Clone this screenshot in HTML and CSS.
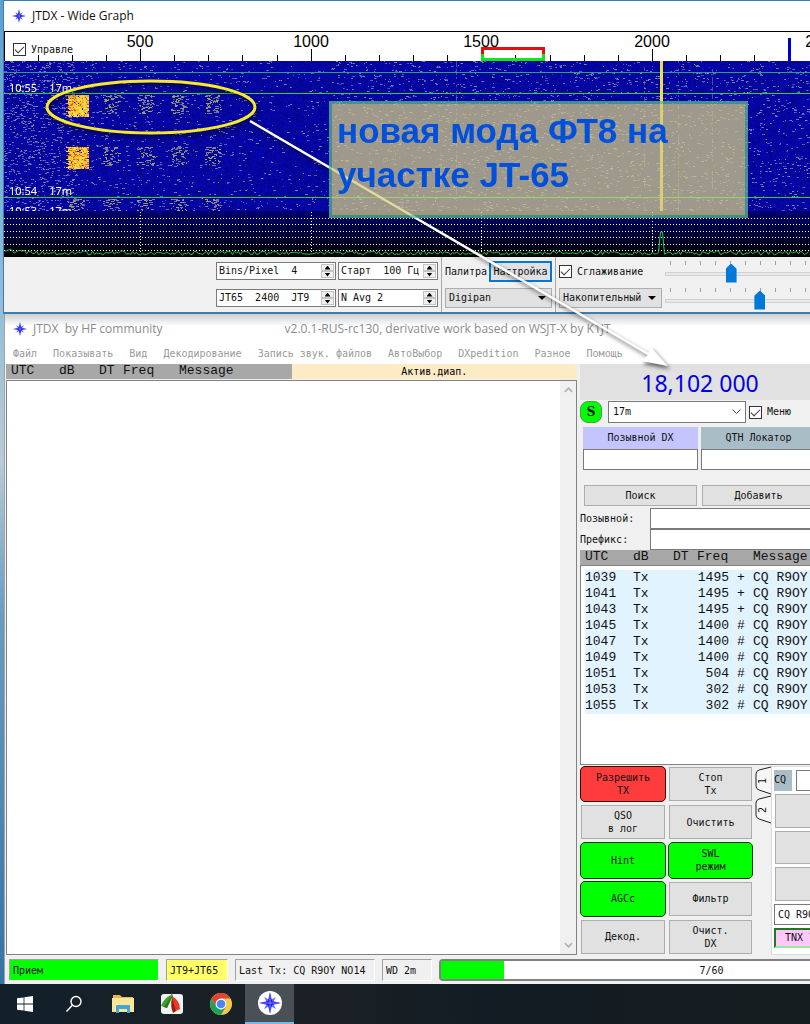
FILE: index.html
```html
<!DOCTYPE html>
<html lang="ru">
<head>
    <meta charset="UTF-8">
    <meta name="viewport" content="width=device-width, initial-scale=1.0">
    <title>JTDX</title>
    <link rel="stylesheet" href="styles.css">
</head>
<body>
    <svg width="0" height="0" class="symbols" aria-hidden="true">
        <symbol id="star" viewBox="0 0 24 24">
            <path fill="#6a6aff" d="M12 9l6.500-3.500L15 12l3.500 6.500L12 15l-6.500 3.500L9 12 5.500 5.500z"/>
            <path fill="#1a1af0" d="M12 0l2.200 9.800L24 12l-9.800 2.200L12 24l-2.200-9.800L0 12l9.800-2.200z"/>
            <path fill="none" stroke="#b9b9ff" stroke-width="0.700" d="M12 12V4M12 12h8M12 12v8M12 12H4"/>
        </symbol>
    </svg>

    <!-- Wide Graph -->
    <section class="window graph-window">
        <header class="titlebar">
            <svg class="logo"><use href="#star"/></svg>
            <span>JTDX - Wide Graph</span>
        </header>

        <div class="scale">
            <svg class="scale-ticks" id="scale"></svg>
            <label class="check scale-check"><input type="checkbox" checked>Управле</label>
        </div>

        <div class="waterfall">
            <canvas id="waterfall" height="196"></canvas>
            <div class="stamps">
                <span class="stamp stamp-1">10:55<b>17m</b></span>
                <span class="stamp stamp-2">10:54<b>17m</b></span>
                <span class="stamp stamp-3">10:53<b>17m</b></span>
            </div>
        </div>

        <div class="graph-controls">
            <div class="spins">
                <div class="spin"><input type="text" aria-label="Bins/Pixel" value="Bins/Pixel  4"><span class="arrows"><button aria-label="+"></button><button aria-label="-"></button></span></div>
                <div class="spin"><input type="text" aria-label="Старт" value="Старт  100 Гц"><span class="arrows"><button aria-label="+"></button><button aria-label="-"></button></span></div>
                <div class="spin"><input type="text" aria-label="JT65 JT9" value="JT65  2400  JT9"><span class="arrows"><button aria-label="+"></button><button aria-label="-"></button></span></div>
                <div class="spin"><input type="text" aria-label="N Avg" value="N Avg 2"><span class="arrows"><button aria-label="+"></button><button aria-label="-"></button></span></div>
            </div>
            <div class="group palette">
                <div class="line">
                    <label for="palette">Палитра</label>
                    <button class="btn focus">Настройка</button>
                </div>
                <select id="palette" class="combo"><option>Digipan</option></select>
            </div>
            <div class="group smooth">
                <div class="line">
                    <label class="check"><input type="checkbox" checked>Сглаживание</label>
                </div>
                <select class="combo" aria-label="Режим"><option>Накопительный</option></select>
            </div>
            <div class="sliders">
                <input type="range" min="0" max="289" value="60" aria-label="Усиление">
                <input type="range" min="0" max="289" value="89" aria-label="Ноль">
            </div>
        </div>
    </section>

    <!-- Main window -->
    <section class="window main-window">
        <header class="titlebar inactive">
            <svg class="logo"><use href="#star"/></svg>
            <span>JTDX&nbsp; by HF community</span>
            <span class="version">v2.0.1-RUS-rc130, derivative work based on WSJT-X by K1JT</span>
        </header>

        <nav class="menu">
            <a href="#">Файл</a>
            <a href="#">Показывать</a>
            <a href="#">Вид</a>
            <a href="#">Декодирование</a>
            <a href="#">Запись звук. файлов</a>
            <a href="#">АвтоВыбор</a>
            <a href="#">DXpedition</a>
            <a href="#">Разное</a>
            <a href="#">Помощь</a>
        </nav>

        <div class="main-body">
            <div class="band">
                <div class="band-head">
                    <div class="columns"><span>UTC</span><span>dB</span><span>DT</span><span>Freq</span><span>Message</span></div>
                    <div class="band-title">Актив.диап.</div>
                </div>
                <div class="listing">
                    <div class="scrollbar">
                        <svg viewBox="0 0 10 6"><path d="M1 5l4-4 4 4"/></svg>
                        <svg viewBox="0 0 10 6"><path d="M1 1l4 4 4-4"/></svg>
                    </div>
                </div>
            </div>

            <div class="side">
                <div class="radio">
                    <div class="freq">18,102 000</div>
                    <div class="band-row">
                        <button class="s-btn">S</button>
                        <select class="band-select" aria-label="Диапазон"><option>17m</option></select>
                        <label class="check"><input type="checkbox" checked>Меню</label>
                    </div>
                    <div class="dx">
                        <div class="dx-field">
                            <label class="dx-call" for="dxcall">Позывной DX</label>
                            <input class="field" type="text" id="dxcall">
                        </div>
                        <div class="dx-field">
                            <label class="dx-grid" for="dxgrid">QTH Локатор</label>
                            <input class="field" type="text" id="dxgrid">
                        </div>
                        <button class="btn">Поиск</button>
                        <button class="btn">Добавить</button>
                    </div>
                </div>
                <div class="form">
                    <label for="call">Позывной:</label><input class="field" type="text" id="call">
                    <label for="prefix">Префикс:</label><input class="field" type="text" id="prefix">
                </div>
                <div class="columns side-columns"><span>UTC</span><span>dB</span><span>DT</span><span>Freq</span><span>Message</span></div>
                <div class="log">
                    <table>
                        <tbody>
                            <tr><td>1039</td><td>Tx</td><td>1495</td><td>+</td><td>CQ R9OY</td></tr>
                            <tr><td>1041</td><td>Tx</td><td>1495</td><td>+</td><td>CQ R9OY</td></tr>
                            <tr><td>1043</td><td>Tx</td><td>1495</td><td>+</td><td>CQ R9OY</td></tr>
                            <tr><td>1045</td><td>Tx</td><td>1400</td><td>#</td><td>CQ R9OY</td></tr>
                            <tr><td>1047</td><td>Tx</td><td>1400</td><td>#</td><td>CQ R9OY</td></tr>
                            <tr><td>1049</td><td>Tx</td><td>1400</td><td>#</td><td>CQ R9OY</td></tr>
                            <tr><td>1051</td><td>Tx</td><td>504</td><td>#</td><td>CQ R9OY</td></tr>
                            <tr><td>1053</td><td>Tx</td><td>302</td><td>#</td><td>CQ R9OY</td></tr>
                            <tr><td>1055</td><td>Tx</td><td>302</td><td>#</td><td>CQ R9OY</td></tr>
                        </tbody>
                    </table>
                </div>
                <div class="bottom">
                    <div class="actions">
                        <button class="btn on red">Разрешить<br>TX</button>
                        <button class="btn">Стоп<br>Tx</button>
                        <button class="btn">QSO<br>в лог</button>
                        <button class="btn">Очистить</button>
                        <button class="btn on">Hint</button>
                        <button class="btn on">SWL<br>режим</button>
                        <button class="btn on">AGCc</button>
                        <button class="btn">Фильтр</button>
                        <button class="btn">Декод.</button>
                        <button class="btn">Очист.<br>DX</button>
                    </div>
                    <div class="tabs">
                        <button class="tab"><svg viewBox="0 0 16 29"><path d="M16 1L4 4Q1 5 1 8v12q0 3 3 4l12 4"/></svg><span>1</span></button>
                        <button class="tab"><svg viewBox="0 0 16 29"><path d="M16 1L4 4Q1 5 1 8v12q0 3 3 4l12 4"/></svg><span>2</span></button>
                    </div>
                    <div class="pane">
                        <div class="cq-row"><label for="cq">CQ</label><input class="field" type="text" id="cq"></div>
                        <button class="btn pane-btn" aria-label="Tx 1"></button>
                        <button class="btn pane-btn" aria-label="Tx 2"></button>
                        <button class="btn pane-btn" aria-label="Tx 3"></button>
                        <input class="field pane-msg" type="text" aria-label="Сообщение" value="CQ R9OY NO14">
                        <button class="tnx">TNX 73</button>
                    </div>
                </div>
            </div>
        </div>

        <footer class="status">
            <div class="cell rx">Прием</div>
            <div class="cell mode">JT9+JT65</div>
            <div class="cell last">Last Tx: CQ R9OY NO14</div>
            <div class="cell wd">WD 2m</div>
            <div class="progress">
                <progress max="60" value="7"></progress>
                <span>7/60</span>
            </div>
        </footer>
    </section>

    <footer class="taskbar">
        <button aria-label="Пуск">
            <svg width="16" height="16" viewBox="0 0 16 16"><path fill="#fff" d="M0 2.3l6.6-.9v6.2H0zM7.4 1.3L16 0v7.6H7.4zM0 8.4h6.6v6.2L0 13.7zM7.4 8.4H16V16l-8.6-1.3z"/></svg>
        </button>
        <button aria-label="Поиск">
            <svg width="18" height="18" viewBox="0 0 18 18"><circle cx="11" cy="6.5" r="5" fill="none" stroke="#fff" stroke-width="1.4"/><path d="M7.3 10.3L1.5 16.5" stroke="#fff" stroke-width="1.4"/></svg>
        </button>
        <button aria-label="Проводник">
            <svg width="22" height="20" viewBox="0 0 22 20"><path fill="#e8b64c" d="M1 1h7l2 2h11v4H1z"/><path fill="#fde59a" d="M0 4h22v14H0z"/><path fill="#3fa9dc" d="M4 19v-7q0-1 1-1h12q1 0 1 1v7h-3v-4H7v4z"/></svg>
        </button>
        <button aria-label="FastStone">
            <svg width="22" height="22" viewBox="0 0 22 22"><rect y="1" width="22" height="20" rx="3" fill="#f2f2f2"/><path fill="#3f9b2f" d="M11 0l1 3-6 12-6-2Q3 5 10 2z"/><path fill="#257a1d" d="M11 3L6 15l-3-1z"/><path fill="#e23a24" d="M11 3q8 5 8 13l-6 3-2-8z"/><path fill="#9e1b12" d="M11 5l4 13-3 2q-3-7-1-15z"/></svg>
        </button>
        <button aria-label="Chrome">
            <svg width="22" height="22" viewBox="0 0 22 22"><circle cx="11" cy="11" r="11" fill="#f9c846"/><path fill="#dc4437" d="M1.5 5.500A11 11 0 0 1 20.500 5.500H11L6.200 13.800z"/><path fill="#1fa05c" d="M1.500 5.500L6.200 13.800 11 16.500 15.800 13.800 11 22A11 11 0 0 1 1.500 5.500z"/><circle cx="11" cy="11" r="5.400" fill="#fff"/><circle cx="11" cy="11" r="4.300" fill="#4688f1"/></svg>
        </button>
        <button class="active" aria-label="JTDX">
            <svg width="24" height="24" viewBox="0 0 24 24"><circle cx="12" cy="12" r="12" fill="#fff"/><use href="#star" x="1" y="1" width="22" height="22"/></svg>
        </button>
    </footer>

    <!-- Notes drawn over both windows -->
    <svg class="arrow" width="810" height="400" aria-hidden="true">
        <ellipse cx="151" cy="107" rx="104" ry="26" fill="none" stroke="#f7e92c" stroke-width="3"/>
        <path d="M250 121L650 355" stroke="#fff" stroke-width="2.500"/>
        <path d="M668 366L641 361 648 355 650 346z" fill="#fff"/>
    </svg>
    <div class="note">новая мода ФТ8 на участке JT-65</div>

    <script src="script.js"></script>
</body>
</html>
```

FILE: styles.css
```css
* {
    box-sizing: border-box;
}

body {
    margin: 0;
    min-height: 100vh;
    display: flex;
    flex-direction: column;
    position: relative;
    overflow: hidden;
    background: linear-gradient(#5f9fcc, #7fb4d6 20%, #b9cbd6 45%, #6a9cc0 60%, #2f6f9f 100%);
    font-family: "DejaVu Sans Mono", monospace;
    font-size: 10px;
    line-height: 12px;
    color: #111;
}

button, input, select {
    font: inherit;
    color: inherit;
    margin: 0;
    padding: 0;
    border-radius: 0;
}

.symbols {
    position: absolute;
}

/* windows */
.window {
    background: #f0f0f0;
}

.graph-window {
    margin-left: 3px;
    border: solid #3a7db3;
    border-width: 1px 0 2px 1px;
}

.main-window {
    flex: 1;
    display: flex;
    flex-direction: column;
    margin-left: 4px;
    margin-right: -174px;
    border-left: 1px solid #9aa4ac;
}

.titlebar {
    display: flex;
    align-items: center;
    height: 30px;
    padding-left: 8px;
    background: #fff;
    font-family: "Open Sans", sans-serif;
    font-size: 12px;
    line-height: 16px;
}

.titlebar.inactive {
    color: #8c8c8c;
    background: linear-gradient(#cfcfcf, #fff 12px);
}

.logo {
    width: 14px;
    height: 14px;
    margin-right: 6px;
}

.version {
    margin-left: 122px;
}

/* frequency scale */
.scale {
    position: relative;
    height: 30px;
    background: #fff;
    border-top: 1px solid #000;
    border-left: 1px solid #000;
}

.scale-ticks {
    display: block;
    width: 100%;
    height: 29px;
    font-family: "Liberation Sans", sans-serif;
    font-size: 16px;
}

.scale-check {
    position: absolute;
    left: 8px;
    top: 11px;
}

.check {
    display: flex;
    align-items: center;
    gap: 5px;
}

.check input {
    appearance: none;
    width: 13px;
    height: 13px;
    border: 1px solid #333;
    background: #fff;
}

.check input:checked::before {
    content: "";
    display: block;
    width: 8px;
    height: 4px;
    margin: 2px 1px;
    border: solid #333;
    border-width: 0 0 1px 1px;
    transform: rotate(-45deg);
}

/* waterfall */
.waterfall {
    position: relative;
    height: 196px;
    background: #0808a0;
}

.waterfall canvas {
    display: block;
}

.stamps {
    position: absolute;
    left: 0;
    top: 0;
    width: 100%;
    height: 150px;
    overflow: hidden;
    color: #fff;
    font-family: "Noto Sans", sans-serif;
    font-size: 11px;
}

.stamp {
    position: absolute;
    left: 5px;
}

.stamp b {
    font-weight: normal;
    margin-left: 12px;
}

.stamp-1 { top: 21px; }
.stamp-2 { top: 124px; }
.stamp-3 { top: 144px; }

/* controls under the waterfall */
.graph-controls {
    display: flex;
    height: 55px;
    padding-left: 212px;
    overflow: hidden;
}

.graph-controls > div {
    flex: none;
}

.spins {
    display: grid;
    grid-template-columns: 120px 100px;
    grid-auto-rows: 18px;
    gap: 9px 2px;
    padding: 5px 3px 0 0;
}

.spin {
    display: flex;
    border: 1px solid #7a7a7a;
    background: #fff;
}

.spin input {
    flex: 1;
    min-width: 0;
    border: 0;
    padding-left: 2px;
    background: none;
    white-space: pre;
}

.arrows {
    display: flex;
    flex-direction: column;
    width: 14px;
    padding: 1px 1px 1px 0;
}

.arrows button {
    flex: 1;
    border: 1px solid #c4c4c4;
    background: #f0f0f0;
}

.arrows button::before {
    content: "";
    display: block;
    width: 6px;
    height: 4px;
    margin: auto;
    background: #000;
    clip-path: polygon(50% 0, 100% 100%, 0 100%);
}

.arrows button + button::before {
    clip-path: polygon(0 0, 100% 0, 50% 100%);
}

.group {
    border-left: 1px solid #a8a8a8;
    padding: 4px 3px 0;
    display: flex;
    flex-direction: column;
    gap: 6px;
}

.line {
    display: flex;
    align-items: center;
    justify-content: space-between;
    height: 21px;
}

.palette {
    width: 114px;
}

.smooth {
    width: 110px;
}

.btn {
    background: #e1e1e1;
    border: 1px solid #adadad;
    text-align: center;
}

.focus {
    height: 21px;
    width: 63px;
    border: 2px solid #0078d7;
}

.combo {
    appearance: none;
    height: 20px;
    width: 100%;
    padding-left: 3px;
    border: 1px solid #adadad;
    background: #e1e1e1 url("data:image/svg+xml,%3Csvg xmlns='http://www.w3.org/2000/svg' width='8' height='4'%3E%3Cpath d='M0 0h8L4 4z'/%3E%3C/svg%3E") no-repeat right 5px center;
}

.sliders {
    display: flex;
    flex-direction: column;
    gap: 6px;
    padding-top: 4px;
}

.sliders input {
    appearance: none;
    flex: none;
    width: 300px;
    height: 21px;
    background: repeating-linear-gradient(90deg, #a0a0a0 0 1px, transparent 1px 15px) 5px 0 / 290px 4px no-repeat;
}

.sliders input::-webkit-slider-runnable-track {
    height: 4px;
    margin-top: 4px;
    background: #e7eaea;
    border: 1px solid #d0d0d0;
}

.sliders input::-webkit-slider-thumb {
    appearance: none;
    width: 11px;
    height: 19px;
    margin-top: -9px;
    background: #0078d7;
    clip-path: polygon(50% 0, 100% 28%, 100% 100%, 0 100%, 0 28%);
}

/* main window */
.menu {
    display: flex;
    gap: 16px;
    height: 20px;
    padding-left: 8px;
    align-items: center;
    background: #fff;
}

.menu a {
    color: #999;
    text-decoration: none;
}

.main-body {
    flex: 1;
    display: grid;
    grid-template-columns: minmax(0, 1fr) 404px;
    gap: 3px;
    padding-left: 1px;
}

.band {
    display: flex;
    flex-direction: column;
}

.band-head {
    display: grid;
    grid-template-columns: 1fr 1fr;
    height: 15px;
    margin-bottom: 1px;
}

.columns {
    display: grid;
    grid-template-columns: 48px 40px 24px 56px 1fr;
    padding-left: 5px;
    height: 15px;
    line-height: 14px;
    background: #a8a8a8;
    font-family: "Liberation Mono", monospace;
    font-size: 13px;
}

.band-title {
    background: #fdebc6;
    color: #000;
    text-align: center;
    line-height: 15px;
}

.listing {
    flex: 1;
    display: flex;
    justify-content: flex-end;
    background: #fff;
    border: 1px solid #828282;
}

.scrollbar {
    width: 16px;
    display: flex;
    flex-direction: column;
    justify-content: space-between;
    align-items: center;
    padding: 6px 0;
    background: #f0f0f0;
}

.scrollbar svg {
    width: 9px;
    height: 6px;
    fill: none;
    stroke: #b4b4b4;
    stroke-width: 2;
}

.side {
    display: flex;
    flex-direction: column;
}

.radio {
    width: 240px;
}

.freq {
    height: 36px;
    line-height: 38px;
    background: #e1e1e1;
    color: #0000e6;
    text-align: center;
    font-family: "Noto Sans", sans-serif;
    font-size: 23px;
}

.band-row {
    display: flex;
    align-items: center;
    height: 24px;
}

.s-btn {
    width: 22px;
    height: 22px;
    margin-right: 6px;
    border: 1px solid #4c9a4c;
    border-radius: 8px;
    background: #00ff00;
    font-family: "DejaVu Serif", serif;
    font-size: 12px;
    font-weight: bold;
}

.band-select {
    appearance: none;
    width: 138px;
    height: 22px;
    margin-right: 3px;
    padding-left: 4px;
    border: 1px solid #7a7a7a;
    background: #fff url("data:image/svg+xml,%3Csvg xmlns='http://www.w3.org/2000/svg' width='9' height='6'%3E%3Cpath d='M.5.5l4 4 4-4' fill='none' stroke='%23444'/%3E%3C/svg%3E") no-repeat right 4px center;
}

.dx {
    display: grid;
    grid-template-columns: 115px 115px;
    grid-template-rows: 43px 21px;
    gap: 15px 3px;
    padding: 3px 3px 0;
}

.dx-field {
    display: flex;
    flex-direction: column;
}

.dx-field label {
    height: 22px;
    line-height: 22px;
    text-align: center;
}

.dx-call {
    background: #c4c4ff;
}

.dx-grid {
    background: #a9bdc6;
}

.dx .btn {
    margin: 0 1px;
}

.field {
    height: 21px;
    border: 1px solid #7a7a7a;
    background: #fff;
}

.form {
    display: grid;
    grid-template-columns: 70px 1fr;
    align-items: center;
    padding-top: 2px;
}

.log {
    height: 200px;
    padding: 4px;
    border: 1px solid #828282;
    background: #fff;
    overflow: hidden;
    font-family: "Liberation Mono", monospace;
    font-size: 13px;
}

.side-columns {
    flex: none;
}

.log table {
    table-layout: fixed;
    width: 100%;
    border-spacing: 0;
    background: #e1f3ff;
}

.log td {
    height: 16px;
    padding: 0;
    line-height: 16px;
}

.log td:nth-child(1) { width: 48px; }
.log td:nth-child(2) { width: 40px; }
.log td:nth-child(3) { width: 56px; text-align: right; }
.log td:nth-child(4) { width: 24px; padding-left: 8px; }

.bottom {
    display: grid;
    grid-template-columns: 173px 18px 1fr;
    flex: 1;
    padding-top: 1px;
}

.actions {
    display: grid;
    grid-template-columns: 86px 85px;
    grid-auto-rows: 1fr;
    gap: 2px;
}

.actions .btn {
    margin: 1px;
    line-height: 13px;
}

.actions .on {
    margin: 0;
    border-color: #003c00;
    border-radius: 5px;
    background: #00ff00;
}

.actions .red {
    border-color: #3c0000;
    background: #ff3c3c;
}

.tabs {
    display: flex;
    flex-direction: column;
    align-items: flex-end;
}

.tab {
    position: relative;
    width: 16px;
    height: 29px;
    border: 0;
    background: none;
}

.tab svg {
    display: block;
    fill: #f6f6f6;
    stroke: #222;
}

.tab span {
    position: absolute;
    left: 3px;
    top: 9px;
    width: 10px;
    transform: rotate(-90deg);
}

.pane {
    display: flex;
    flex-direction: column;
    gap: 3px;
    padding: 3px 2px;
    background: #fff;
    border: 1px solid #dcdcdc;
}

.cq-row {
    display: flex;
    gap: 4px;
}

.cq-row label {
    width: 18px;
    line-height: 20px;
    background: #a9bdc6;
}

.cq-row .field {
    flex: 1;
}

.pane-btn {
    flex: 1;
    margin: 0 1px;
}

.pane-msg {
    padding-left: 3px;
}

.tnx {
    height: 20px;
    margin-bottom: 3px;
    padding-left: 9px;
    text-align: left;
    background: #ffc8ff;
    border: 2px solid;
    border-color: #1f7a1f #90ee90 #90ee90 #1f7a1f;
}

/* status bar */
.status {
    display: flex;
    align-items: center;
    height: 29px;
    padding-left: 4px;
}

.cell {
    height: 22px;
    margin-right: 7px;
    padding-left: 3px;
    line-height: 22px;
    border: 1px solid;
    border-color: #a0a0a0 #fff #fff #a0a0a0;
    white-space: nowrap;
}

.rx {
    width: 150px;
    background: #00ff00;
}

.mode {
    width: 62px;
    background: #ffff66;
}

.last {
    width: 140px;
}

.wd {
    width: 50px;
}

.progress {
    flex: 1;
    display: grid;
    height: 22px;
    border: 2px solid #808080;
    border-radius: 4px;
    background: #fff;
}

.progress progress,
.progress span {
    grid-area: 1 / 1;
}

.progress span {
    text-align: center;
    line-height: 20px;
}

progress {
    appearance: none;
    width: 100%;
    height: 18px;
}

progress::-webkit-progress-bar {
    background: #fff;
}

progress::-webkit-progress-value {
    background: #00ff00;
}

/* taskbar */
.taskbar {
    display: flex;
    height: 40px;
    background: linear-gradient(90deg, #12202a, #1b2125 35%, #131c24 60%, #161d20);
}

.taskbar button {
    width: 49px;
    display: flex;
    align-items: center;
    justify-content: center;
    border: 0;
    background: none;
}

.taskbar .active {
    background: #4a5156;
    border-bottom: 2px solid #76b9ed;
}

/* notes */
.arrow {
    position: absolute;
    left: 0;
    top: 0;
    pointer-events: none;
    filter: drop-shadow(2px 3px 2px rgba(0, 0, 0, 0.6));
}

.note {
    position: absolute;
    left: 329px;
    top: 101px;
    width: 419px;
    height: 117px;
    padding: 5px;
    border: 3px solid rgba(90, 190, 140, 0.75);
    background: rgba(210, 203, 133, 0.75);
    background-clip: padding-box;
    color: #0050dc;
    font-family: "Liberation Sans", sans-serif;
    font-size: 35px;
    line-height: 44px;
    font-weight: bold;
}
```

FILE: script.js
```js
const canvas = document.getElementById('waterfall');
const ctx = canvas.getContext('2d');
const width = canvas.parentElement.clientWidth;
const fallHeight = 150;
const hz500 = 136;      // x of the 500 Hz mark
const step = 512 / 3;   // pixels per 500 Hz

// small seeded generator so that every load gives the same noise
let seed = 12345;
function rnd() {
    seed = (seed * 1664525 + 1013904223) % 4294967296;
    return seed / 4294967296;
}

function drawScale() {
    const scale = document.getElementById('scale');
    let out = '';
    for (let i = -3; hz500 + i * step / 5 < width + 30; i++) {
        const x = Math.round(hz500 + i * step / 5) - 1;
        const major = i % 5 === 0;
        out += `<path d="M${x + 0.5} 29V${major ? 17 : 23}" stroke="#000"/>`;
        if (major) {
            out += `<text x="${x}" y="15" text-anchor="middle">${500 + i * 100}</text>`;
        }
    }
    out += '<path d="M477.500 22V16.500H538.500V22" fill="none" stroke="#e60f0f" stroke-width="3"/>';
    out += '<path d="M477.500 22V27.500H538.500V22" fill="none" stroke="#14e614" stroke-width="3"/>';
    out += '<path d="M784.500 6V29" stroke="#0000d2" stroke-width="3"/>';
    scale.innerHTML = out;
}

function drawNoise() {
    const img = ctx.createImageData(width, fallHeight);
    for (let y = 0; y < fallHeight; y++) {
        let run = 0;
        for (let x = 0; x < width; x++) {
            const p = (y * width + x) * 4;
            const density = x < 70 ? 0.08 : x < 250 ? 0.025 : x < 330 ? 0.015 : 0.035;
            if (run === 0 && rnd() < density) run = 1 + Math.floor(rnd() * 3);
            if (run > 0) {
                const v = 60 + rnd() * 80;
                img.data[p] = v;
                img.data[p + 1] = v;
                img.data[p + 2] = 175;
                run--;
            } else {
                img.data[p] = 5;
                img.data[p + 1] = 5;
                img.data[p + 2] = 120 + rnd() * 80;
            }
            img.data[p + 3] = 255;
        }
    }
    ctx.putImageData(img, 0, 0);
}

function drawStrong(x, y, h) {
    for (let row = 0; row < h; row++) {
        for (let i = 0; i < 20; i++) {
            if (rnd() > 0.85) continue;
            const r = rnd();
            ctx.fillStyle = r < 0.15 ? '#e8501a' : r < 0.5 ? '#f0b428' : '#f5dc46';
            ctx.fillRect(x + i, y + row, 2, 1);
        }
        if (row % 4 === 0) ctx.fillRect(x - 2, y + row, 5, 1);
    }
}

// weak copies of the signal: a ragged outline with short strokes inside
function drawWeak(x, y, h) {
    for (let row = 0; row < h; row++) {
        const n = row < 2 ? 5 : 2 + Math.floor(rnd() * 2);
        for (let i = 0; i < n; i++) {
            ctx.fillStyle = rnd() < 0.5 ? '#a0a05a' : '#787896';
            ctx.fillRect(x + Math.floor(rnd() * 16), y + row, 1 + Math.floor(rnd() * 3), 1);
        }
    }
}

function drawSpectrum() {
    const grad = ctx.createLinearGradient(0, 150, 0, 196);
    grad.addColorStop(0, '#00006e');
    grad.addColorStop(0.85, '#000010');
    grad.addColorStop(1, '#000');
    ctx.fillStyle = grad;
    ctx.fillRect(0, 150, width, 46);

    ctx.fillStyle = '#fff';
    for (const y of [157, 163, 170, 176, 183, 189]) {
        for (let x = 0; x < width; x += 3) ctx.fillRect(x, y, 1, 1);
    }
    for (let x = hz500; x < width; x += step) {
        for (let y = 151; y < 192; y += 3) ctx.fillRect(Math.round(x), y, 1, 1);
    }

    ctx.strokeStyle = '#28d23c';
    ctx.lineWidth = 1;
    ctx.beginPath();
    for (let x = 0; x < width; x += 2) {
        let y = 190 + rnd() * 4;
        if (x < 26) y -= (26 - x) / 8;
        if (x === 656 || x === 658) y = 171;
        ctx.lineTo(x + 0.5, y);
    }
    ctx.stroke();
}

drawScale();
canvas.width = width;
drawNoise();

[34, 86, 138].forEach((y, n) => {
    const h = n < 2 ? 22 : 12;
    if (n < 2) drawStrong(64, y, h);
    else drawWeak(64, y, h);
    for (let i = 0; i < 4; i++) drawWeak(99 + i * 34, y, Math.min(h, 19));
});

// minute separators
ctx.fillStyle = '#28a078';
ctx.fillRect(0, 11, width, 1);
ctx.fillStyle = '#28d23c';
ctx.fillRect(0, 32, width, 1);
ctx.fillRect(0, 136, width, 1);

// faint and strong carriers
ctx.fillStyle = 'rgba(150, 150, 150, 0.5)';
for (const x of [452, 640, 674, 708]) {
    for (let y = 0; y < fallHeight; y += 2) if (rnd() < 0.5) ctx.fillRect(x, y, 1, 2);
}
ctx.fillStyle = '#f0dc46';
ctx.fillRect(656, 0, 3, fallHeight);

drawSpectrum();
```
